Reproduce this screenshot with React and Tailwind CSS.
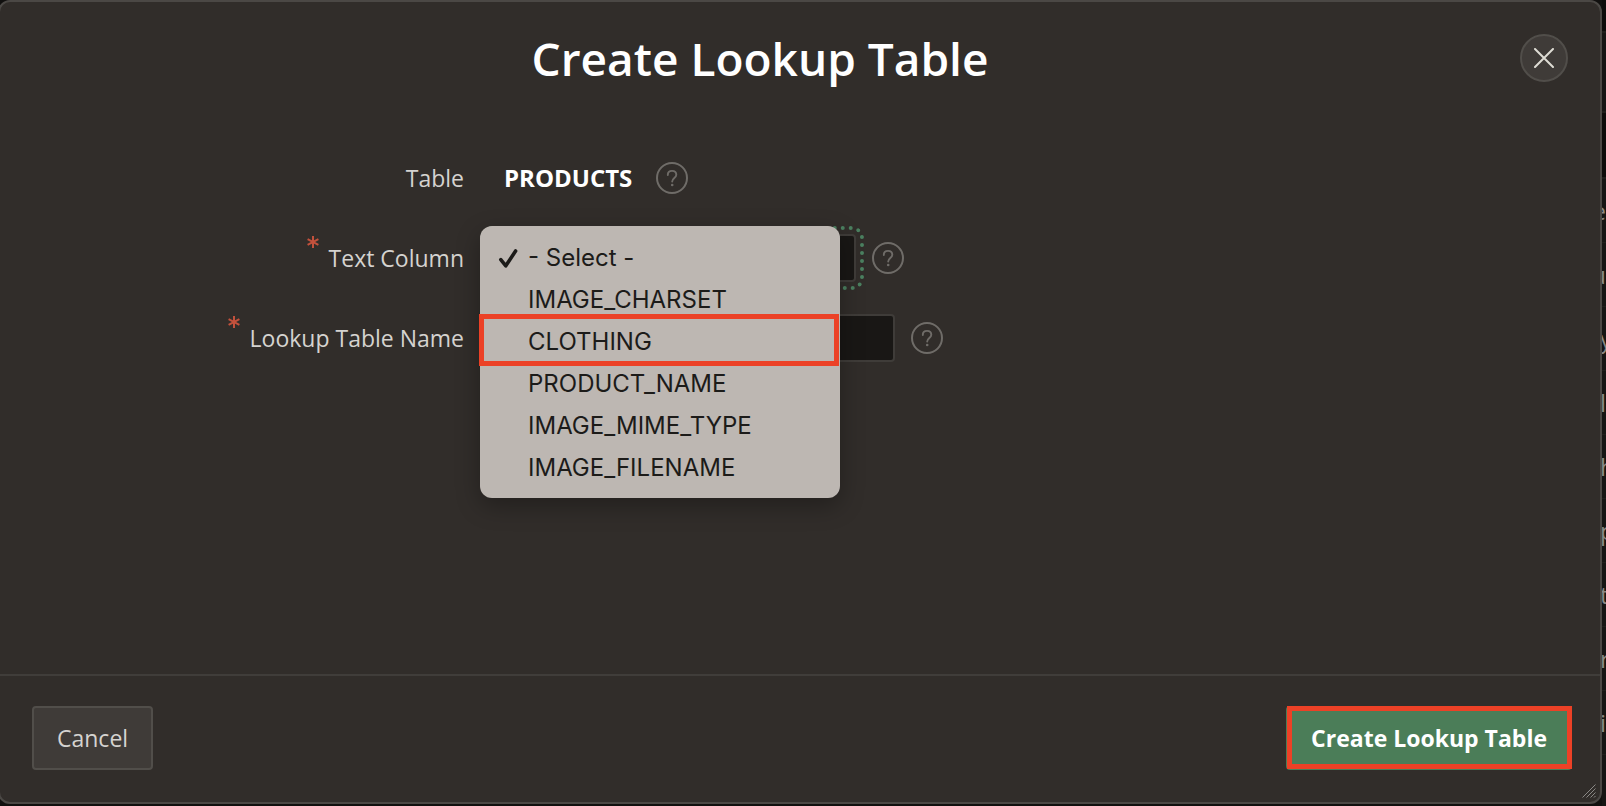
const columns = ['IMAGE_CHARSET', 'CLOTHING', 'PRODUCT_NAME', 'IMAGE_MIME_TYPE', 'IMAGE_FILENAME'];
const backdropRows = [
  { letter: 'e', end: true },
  { letter: 'u', end: true },
  { letter: 'y', end: false },
  { letter: 'l', end: true },
  { letter: 'h', end: false },
  { letter: 'p', end: false },
  { letter: 't', end: false },
  { letter: 'r', end: false },
  { letter: 'i', end: false },
];

function HelpButton({ label }) {
  return (
    <button type="button" aria-label={label} className="shrink-0 text-[#6f6c68]">
      <svg className="block size-8" viewBox="0 0 32 32" fill="none" stroke="currentColor">
        <circle cx="16" cy="16" r="15" strokeWidth="2" />
        <path
          d="M11.8 13c0-2.7 1.8-4.1 4.2-4.1s4.3 1.5 4.3 3.9c0 3.1-4.1 3.4-4.1 6.8"
          strokeWidth="1.9"
          strokeLinecap="round"
        />
        <circle cx="16.2" cy="23" r="1.3" fill="currentColor" stroke="none" />
      </svg>
    </button>
  );
}

function RequiredMark() {
  return (
    <svg className="size-3 text-[#c3513c]" viewBox="0 0 12 12" fill="none" stroke="currentColor" strokeWidth="2" aria-hidden="true">
      <path d="M6 0v12M.6 3.2l10.8 5.6M.6 8.8l10.8-5.6" />
    </svg>
  );
}

function FieldLabel({ htmlFor, required, children }) {
  return (
    <div className="flex h-11 w-[480px] shrink-0 items-center justify-end pr-4">
      {required && (
        <span className="mr-2.5 self-start">
          <RequiredMark />
        </span>
      )}
      <label htmlFor={htmlFor} className="text-[23px] leading-8 text-[#d5d3d0]">
        {children}
      </label>
    </div>
  );
}

function ColumnMenu() {
  return (
    <ul
      role="listbox"
      aria-label="Text Column options"
      className="absolute -top-2 -left-2 z-10 w-[360px] rounded-xl bg-[#bdb7b2] pt-[11px] pb-[9px] font-['Inter',sans-serif] text-2xl text-[#1c1b19] shadow-[0_8px_24px_rgba(0,0,0,0.3)]"
    >
      <li role="option" aria-selected="true" className="flex h-[42px] items-center pl-[18px]">
        <svg className="mr-2.5 size-5" viewBox="0 0 20 20" fill="none" stroke="currentColor" strokeWidth="3.6" strokeLinecap="round" strokeLinejoin="round" aria-hidden="true">
          <path d="M2.8 11.6l5 6.2L17.6 3" />
        </svg>
        - Select -
      </li>
      {columns.map((name) => (
        <li key={name} role="option" aria-selected="false" className="relative flex h-[42px] items-center pl-12">
          {name}
          {name === 'CLOTHING' && (
            <span className="pointer-events-none absolute -top-[7px] right-px -bottom-[3px] -left-px border-5 border-[#ec4126]" />
          )}
        </li>
      ))}
    </ul>
  );
}

export default function App() {
  return (
    <div className="flex min-h-screen overflow-hidden bg-[#11100f] font-['Open_Sans','Noto_Sans',sans-serif] antialiased">
      <main className="-ml-0.5 mb-0.5 flex flex-1 flex-col rounded-xl border-2 border-[#4b4845] bg-[#312d2a]">
        <header className="flex items-start pt-8 pr-8">
          <h1 className="flex-1 text-center text-[46px] leading-12 font-semibold text-white">
            Create Lookup Table
          </h1>
          <button
            type="button"
            aria-label="Close"
            className="flex size-12 items-center justify-center rounded-full border-2 border-[#514e4a] bg-[#3f3b38] text-[#dedcd4]"
          >
            <svg className="size-5" viewBox="0 0 20 20" stroke="currentColor" strokeWidth="2" strokeLinecap="round">
              <path d="M1 1l18 18M19 1L1 19" />
            </svg>
          </button>
        </header>

        <form id="lookup-form" className="flex flex-1 flex-col pt-14">
          <div className="flex h-20 items-center">
            <FieldLabel htmlFor="table">Table</FieldLabel>
            <output id="table" className="ml-6 text-2xl leading-8 font-bold text-white">
              PRODUCTS
            </output>
            <div className="ml-6 flex">
              <HelpButton label="Help for Table" />
            </div>
          </div>

          <div className="flex h-20 items-center">
            <FieldLabel htmlFor="text-column" required>
              Text Column
            </FieldLabel>
            <div className="relative ml-2 h-12 w-[368px]">
              <select
                id="text-column"
                className="block h-full w-full appearance-none rounded-sm border-2 border-[#3f3c39] bg-[#191715] text-transparent outline-4 outline-offset-4 outline-[#4b8060] outline-dotted"
              >
                <option value="">- Select -</option>
                {columns.map((name) => (
                  <option key={name}>{name}</option>
                ))}
              </select>
              <ColumnMenu />
            </div>
            <div className="ml-4 flex">
              <HelpButton label="Help for Text Column" />
            </div>
          </div>

          <div className="flex h-20 items-center">
            <FieldLabel htmlFor="lookup-name" required>
              Lookup Table Name
            </FieldLabel>
            <input
              id="lookup-name"
              type="text"
              className="ml-2 h-12 w-[407px] rounded-sm border-2 border-[#3f3c39] bg-[#191715] px-4 text-2xl text-white"
            />
            <div className="ml-4 flex">
              <HelpButton label="Help for Lookup Table Name" />
            </div>
          </div>
        </form>

        <footer className="relative flex items-center justify-between border-t-2 border-[#403d3a] pt-[30px] pr-7 pb-8 pl-8">
          <button type="button" className="h-16 rounded-sm border-2 border-[#514e4a] bg-[#3f3b38] px-[23px] text-[23px] text-[#d5d3d0]">
            Cancel
          </button>
          <button type="submit" form="lookup-form" className="relative h-16 rounded-sm bg-[#4b7d58] px-[25px] text-[23px] font-bold text-white">
            Create Lookup Table
            <span className="pointer-events-none absolute top-0 right-0 bottom-px left-px border-5 border-[#ec4126]" />
          </button>
          <svg className="absolute right-1 bottom-1 size-[14px] text-[#8a8885]" viewBox="0 0 14 14" stroke="currentColor" strokeWidth="1" aria-hidden="true">
            <path d="M.5 13.5l13-13M4.5 13.5l9-9M8.5 13.5l5-5M12 13.5l1.5-1.5" />
          </svg>
        </footer>
      </main>

      <div aria-hidden="true" className="flex w-1 flex-col overflow-hidden bg-[#161514] text-2xl text-[#8a8885]">
        <div className="h-[33px] shrink-0 border-b-2 border-[#1f1e1c] bg-[#0d0c0b]" />
        <div className="h-20 shrink-0 border-b-2 border-[#1f1e1c]" />
        <div className="h-[66px] shrink-0 border-b-2 border-[#1f1e1c] bg-[#0d0c0b]" />
        {backdropRows.map(({ letter, end }, index) => (
          <div
            key={index}
            className={`flex h-16 shrink-0 items-center border-b border-[#1f1e1c] ${end ? 'justify-end' : '-ml-0.5 justify-start'}`}
          >
            {letter}
          </div>
        ))}
      </div>
    </div>
  );
}
